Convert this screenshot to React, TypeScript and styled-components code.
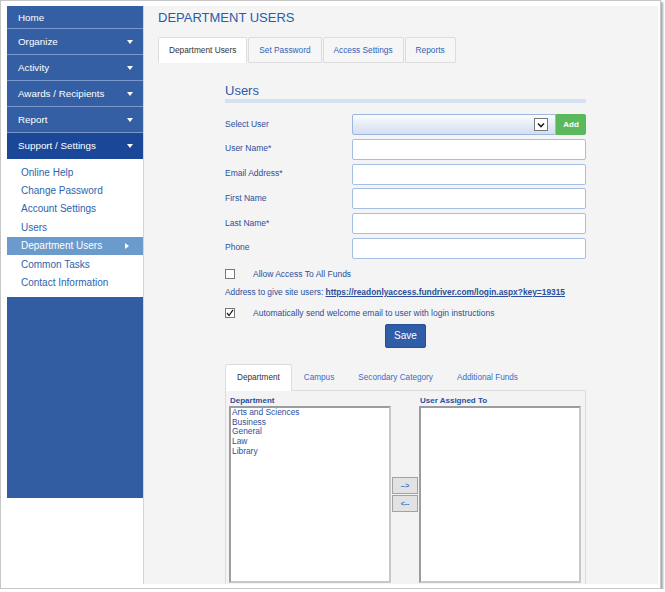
import styled, { createGlobalStyle } from "styled-components"

const GlobalStyle = createGlobalStyle`
  body {
    margin: 0;
    background: #fff;
    font-family: "Liberation Sans", Arial, sans-serif;
  }
  * { box-sizing: border-box; }
`

const menu = [
  { label: "Home", caret: false },
  { label: "Organize", caret: true },
  { label: "Activity", caret: true },
  { label: "Awards / Recipients", caret: true },
  { label: "Report", caret: true },
]

const subMenu = [
  "Online Help",
  "Change Password",
  "Account Settings",
  "Users",
  "Department Users",
  "Common Tasks",
  "Contact Information",
]

const fields = ["User Name*", "Email Address*", "First Name", "Last Name*", "Phone"]
const departments = ["Arts and Sciences", "Business", "General", "Law", "Library"]

export default function App() {
  return (
    <>
      <GlobalStyle />
      <Frame>
        <Sidebar>
          {menu.map((m, i) => (
            <MenuItem key={m.label} $first={i === 0}>
              {m.label}
              {m.caret && <DownCaret />}
            </MenuItem>
          ))}
          <MenuItem $active>
            Support / Settings
            <DownCaret />
          </MenuItem>
          <SubMenu>
            {subMenu.map((s) => (
              <SubItem key={s} $current={s === "Department Users"}>
                {s}
                {s === "Department Users" && <RightCaret />}
              </SubItem>
            ))}
          </SubMenu>
          <SideFill />
        </Sidebar>

        <Main>
          <PageTitle>DEPARTMENT USERS</PageTitle>
          <TopTabs>
            <TopTab $active>Department Users</TopTab>
            <TopTab>Set Password</TopTab>
            <TopTab>Access Settings</TopTab>
            <TopTab>Reports</TopTab>
          </TopTabs>

          <FormSection>
            <SectionTitle>Users</SectionTitle>
            <SectionBar />

            <FormGrid>
              <Label>Select User</Label>
              <SelectRow>
                <SelectBox>
                  <DropBtn>
                    <svg width="8" height="6" viewBox="0 0 8 6">
                      <path d="M1 1.5 L4 4.5 L7 1.5" fill="none" stroke="#222" strokeWidth="1.6" />
                    </svg>
                  </DropBtn>
                </SelectBox>
                <AddButton>Add</AddButton>
              </SelectRow>
              {fields.map((f) => (
                <>
                  <Label key={f}>{f}</Label>
                  <TextInput key={f + "-in"} />
                </>
              ))}
            </FormGrid>

            <CheckRow $top={9}>
              <CheckBox />
              <CheckLabel>Allow Access To All Funds</CheckLabel>
            </CheckRow>
            <AddressLine>
              Address to give site users:{" "}
              <SiteLink>https://readonlyaccess.fundriver.com/login.aspx?key=19315</SiteLink>
            </AddressLine>
            <CheckRow $top={9}>
              <CheckBox>
                <svg width="8" height="8" viewBox="0 0 8 8">
                  <path d="M1 4 L3 6.5 L7 0.8" fill="none" stroke="#222" strokeWidth="1.3" />
                </svg>
              </CheckBox>
              <CheckLabel>Automatically send welcome email to user with login instructions</CheckLabel>
            </CheckRow>
            <SaveWrap>
              <SaveButton>Save</SaveButton>
            </SaveWrap>

            <SubTabs>
              <SubTab $active>Department</SubTab>
              <SubTab>Campus</SubTab>
              <SubTab>Secondary Category</SubTab>
              <SubTab>Additional Funds</SubTab>
            </SubTabs>
            <Panel>
              <PanelLabels>
                <ListLabel>Department</ListLabel>
                <span />
                <ListLabel>User Assigned To</ListLabel>
              </PanelLabels>
              <ListsRow>
                <ListBox>
                  {departments.map((d) => (
                    <ListItem key={d}>{d}</ListItem>
                  ))}
                </ListBox>
                <MoveButtons>
                  <MoveButton>--&gt;</MoveButton>
                  <MoveButton>&lt;--</MoveButton>
                </MoveButtons>
                <ListBox />
              </ListsRow>
            </Panel>
          </FormSection>
        </Main>
      </Frame>
    </>
  )
}

const Frame = styled.div`
  width: 661px;
  height: 589px;
  border: 1px solid #c6c6c6;
  box-shadow: 2px 2px 2px rgba(0, 0, 0, 0.35);
  background: #fff;
  padding: 5px 2px 4px 6px;
  display: flex;
`

const Sidebar = styled.div`
  width: 136px;
  flex-shrink: 0;
  display: flex;
  flex-direction: column;
  align-self: flex-start;
`

const MenuItem = styled.div<{ $first?: boolean; $active?: boolean }>`
  height: ${(p) => (p.$first ? 23 : 26)}px;
  padding-left: 11px;
  padding-right: 10px;
  display: flex;
  align-items: center;
  justify-content: space-between;
  color: #fff;
  font-size: 9.8px;
  background: ${(p) => (p.$active ? "#1b4798" : "#355fa4")};
  border-bottom: 1px solid ${(p) => (p.$active ? "#1b4798" : "#7a98cb")};
`

const DownCaret = styled.span`
  width: 0;
  height: 0;
  border-left: 3.5px solid transparent;
  border-right: 3.5px solid transparent;
  border-top: 4px solid #fff;
`

const RightCaret = styled.span`
  width: 0;
  height: 0;
  border-top: 3.5px solid transparent;
  border-bottom: 3.5px solid transparent;
  border-left: 4px solid #fff;
`

const SubMenu = styled.div`
  background: #fff;
  padding: 4px 0 5px;
`

const SubItem = styled.div<{ $current?: boolean }>`
  height: 18.4px;
  display: flex;
  align-items: center;
  justify-content: space-between;
  padding: 0 14px 0 14px;
  font-size: 10px;
  color: ${(p) => (p.$current ? "#fff" : "#2d63b0")};
  background: ${(p) => (p.$current ? "#6b9bcc" : "transparent")};
`

const SideFill = styled.div`
  height: 201px;
  background: #335da3;
`

const Main = styled.div`
  flex: 1;
  min-width: 0;
  background: #f4f4f4;
  border-left: 1px solid #cbd6e8;
  overflow: hidden;
  padding: 4px 0 0 14px;
`

const PageTitle = styled.div`
  font-size: 13px;
  line-height: 15px;
  color: #2b5bab;
`

const TopTabs = styled.div`
  display: flex;
  margin-top: 12px;
`

const TopTab = styled.div<{ $active?: boolean }>`
  height: 26px;
  padding: 0 10px;
  margin-right: 1px;
  line-height: 24px;
  font-size: 8.3px;
  border: 1px solid #dcdcdc;
  border-bottom-color: ${(p) => (p.$active ? "#fff" : "#dcdcdc")};
  background: ${(p) => (p.$active ? "#fff" : "#f6f6f6")};
  color: ${(p) => (p.$active ? "#333" : "#2f63b8")};
  border-radius: 2px 2px 0 0;
`

const FormSection = styled.div`
  margin-left: 67px;
  width: 361px;
`

const SectionTitle = styled.div`
  margin-top: 20px;
  font-size: 13px;
  line-height: 16px;
  color: #2d5aa9;
`

const SectionBar = styled.div`
  height: 4px;
  background: #d6e2f3;
`

const FormGrid = styled.div`
  margin-top: 11px;
  display: grid;
  grid-template-columns: 127px 234px;
  grid-auto-rows: 21px;
  row-gap: 3.8px;
  align-items: center;
`

const Label = styled.div`
  font-size: 8.5px;
  color: #2b4f9b;
  margin-top: -2px;
`

const SelectRow = styled.div`
  display: flex;
  height: 21px;
`

const SelectBox = styled.div`
  flex: 1;
  border: 1px solid #9db6df;
  border-radius: 2px 0 0 2px;
  background: linear-gradient(#fbfcfe, #d3def0);
  display: flex;
  align-items: center;
  justify-content: flex-end;
  padding-right: 7px;
`

const DropBtn = styled.div`
  width: 14px;
  height: 13px;
  background: #fff;
  border: 1px solid #777;
  display: flex;
  align-items: center;
  justify-content: center;
`

const AddButton = styled.div`
  width: 30px;
  background: #5cb85c;
  color: #fff;
  font-size: 8px;
  font-weight: bold;
  display: flex;
  align-items: center;
  justify-content: center;
  border-radius: 0 2px 2px 0;
`

const TextInput = styled.div`
  height: 21px;
  background: #fff;
  border: 1px solid #a6bee4;
  border-radius: 2px;
`

const CheckRow = styled.div<{ $top: number }>`
  display: flex;
  align-items: center;
  margin-top: ${(p) => p.$top}px;
  height: 12px;
`

const CheckBox = styled.div`
  width: 10px;
  height: 10px;
  border: 1px solid #777;
  background: #fff;
  display: flex;
  align-items: center;
  justify-content: center;
`

const CheckLabel = styled.span`
  margin-left: 18px;
  font-size: 8.5px;
  color: #2b4f9b;
`

const AddressLine = styled.div`
  margin-top: 6px;
  font-size: 8.4px;
  line-height: 12px;
  color: #2b4f9b;
`

const SiteLink = styled.span`
  font-weight: bold;
  text-decoration: underline;
  color: #2b4f9b;
`

const SaveWrap = styled.div`
  display: flex;
  justify-content: center;
  margin-top: 5px;
`

const SaveButton = styled.div`
  width: 41px;
  height: 24px;
  background: #2f5da8;
  border: 1px solid #244f94;
  border-radius: 2px;
  color: #fff;
  font-size: 10px;
  display: flex;
  align-items: center;
  justify-content: center;
`

const SubTabs = styled.div`
  display: flex;
  margin-top: 16px;
`

const SubTab = styled.div<{ $active?: boolean }>`
  height: 27px;
  padding: 0 11px;
  line-height: 26px;
  font-size: 8.2px;
  color: ${(p) => (p.$active ? "#333" : "#3a6cc7")};
  background: ${(p) => (p.$active ? "#fff" : "transparent")};
  border: 1px solid ${(p) => (p.$active ? "#dcdcdc" : "transparent")};
  border-bottom: none;
  border-radius: 3px 3px 0 0;
  margin-bottom: -1px;
  position: relative;
`

const Panel = styled.div`
  border: 1px solid #dcdcdc;
  background: #f3f3f3;
  padding: 5px 3px 0 3px;
  height: 220px;
`

const PanelLabels = styled.div`
  display: grid;
  grid-template-columns: 162px 28px 162px;
`

const ListLabel = styled.div`
  font-size: 8px;
  line-height: 10px;
  font-weight: bold;
  color: #2b4f9b;
  padding-left: 1px;
`

const ListsRow = styled.div`
  display: flex;
  align-items: center;
  margin-top: 0;
`

const ListBox = styled.div`
  width: 162px;
  height: 177px;
  background: #fff;
  border: 2px solid #9c9c9c;
  border-right-color: #c8c8c8;
  border-bottom-color: #c8c8c8;
`

const ListItem = styled.div`
  font-size: 8.4px;
  line-height: 9.7px;
  color: #2b4f9b;
  padding-left: 1px;
`

const MoveButtons = styled.div`
  width: 28px;
  display: flex;
  flex-direction: column;
  align-items: center;
  gap: 1px;
`

const MoveButton = styled.div`
  width: 26px;
  height: 17px;
  background: #e2e2e2;
  border: 1px solid #a2a2a2;
  color: #3a6cc7;
  font-size: 7px;
  font-weight: bold;
  display: flex;
  align-items: center;
  justify-content: center;
`
